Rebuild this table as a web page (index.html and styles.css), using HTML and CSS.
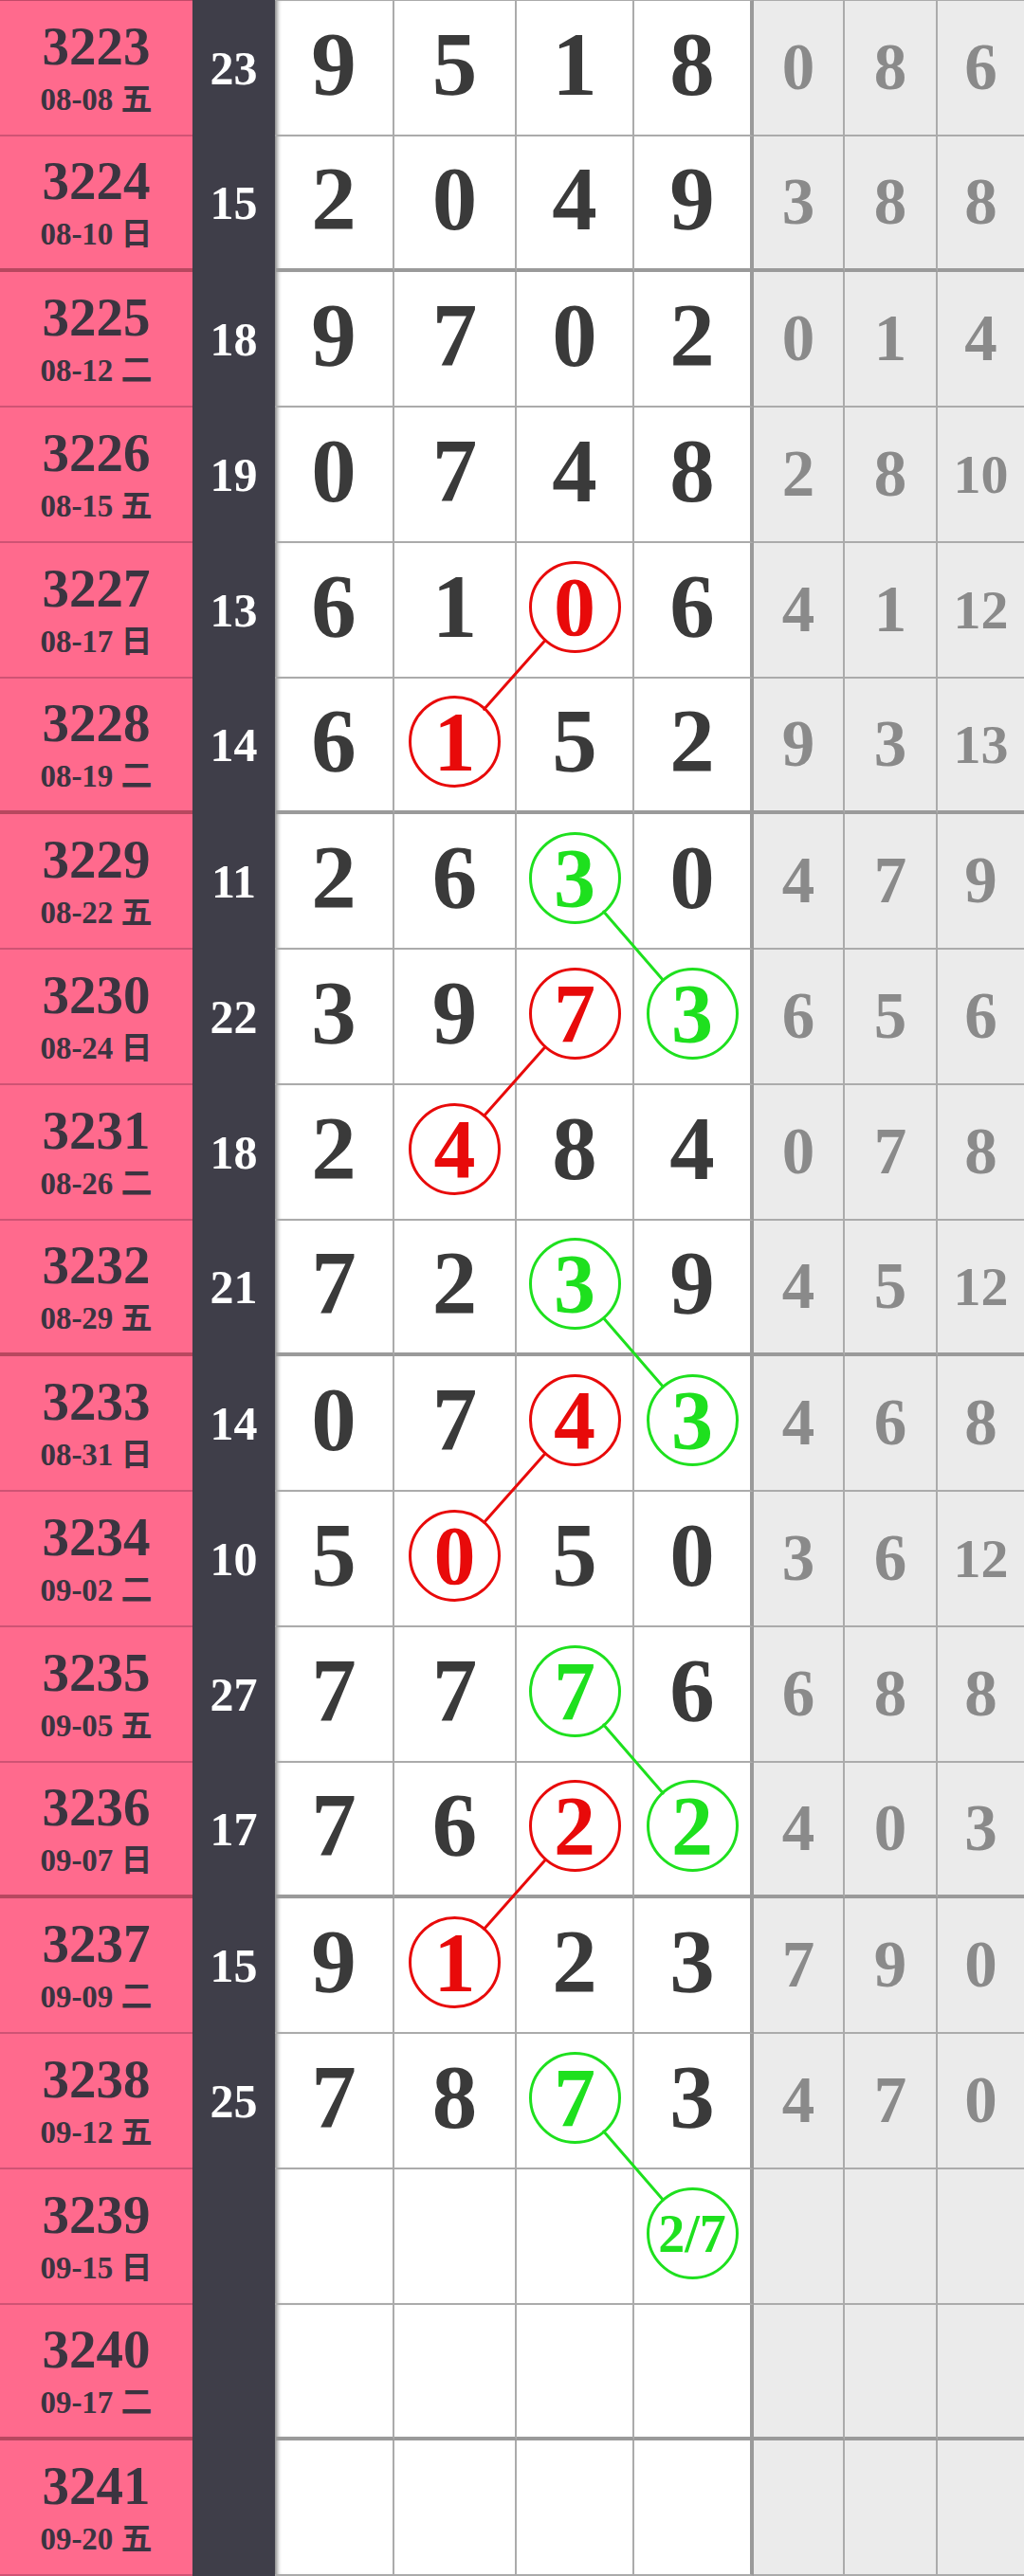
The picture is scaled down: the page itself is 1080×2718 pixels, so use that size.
FILE: index.html
```html
<!DOCTYPE html>
<html lang="zh">
<head>
<meta charset="utf-8">
<title>走势图</title>
<link rel="stylesheet" href="styles.css">
</head>
<body>
<div class="board">
  <div class="row first">
    <div class="no"><b>3223</b><span>08-08 五</span></div><div class="sum">23</div>
    <div class="d">9</div><div class="d">5</div><div class="d">1</div><div class="d">8</div>
    <div class="g">0</div><div class="g">8</div><div class="g">6</div>
  </div>
  <div class="row grp">
    <div class="no"><b>3224</b><span>08-10 日</span></div><div class="sum">15</div>
    <div class="d">2</div><div class="d">0</div><div class="d">4</div><div class="d">9</div>
    <div class="g">3</div><div class="g">8</div><div class="g">8</div>
  </div>
  <div class="row">
    <div class="no"><b>3225</b><span>08-12 二</span></div><div class="sum">18</div>
    <div class="d">9</div><div class="d">7</div><div class="d">0</div><div class="d">2</div>
    <div class="g">0</div><div class="g">1</div><div class="g">4</div>
  </div>
  <div class="row">
    <div class="no"><b>3226</b><span>08-15 五</span></div><div class="sum">19</div>
    <div class="d">0</div><div class="d">7</div><div class="d">4</div><div class="d">8</div>
    <div class="g">2</div><div class="g">8</div><div class="g two">10</div>
  </div>
  <div class="row">
    <div class="no"><b>3227</b><span>08-17 日</span></div><div class="sum">13</div>
    <div class="d">6</div><div class="d">1</div><div class="d"><span class="ring red">0</span></div><div class="d">6</div>
    <div class="g">4</div><div class="g">1</div><div class="g two">12</div>
  </div>
  <div class="row grp">
    <div class="no"><b>3228</b><span>08-19 二</span></div><div class="sum">14</div>
    <div class="d">6</div><div class="d"><span class="ring red">1</span></div><div class="d">5</div><div class="d">2</div>
    <div class="g">9</div><div class="g">3</div><div class="g two">13</div>
  </div>
  <div class="row">
    <div class="no"><b>3229</b><span>08-22 五</span></div><div class="sum">11</div>
    <div class="d">2</div><div class="d">6</div><div class="d"><span class="ring green">3</span></div><div class="d">0</div>
    <div class="g">4</div><div class="g">7</div><div class="g">9</div>
  </div>
  <div class="row">
    <div class="no"><b>3230</b><span>08-24 日</span></div><div class="sum">22</div>
    <div class="d">3</div><div class="d">9</div><div class="d"><span class="ring red">7</span></div><div class="d"><span class="ring green">3</span></div>
    <div class="g">6</div><div class="g">5</div><div class="g">6</div>
  </div>
  <div class="row">
    <div class="no"><b>3231</b><span>08-26 二</span></div><div class="sum">18</div>
    <div class="d">2</div><div class="d"><span class="ring red">4</span></div><div class="d">8</div><div class="d">4</div>
    <div class="g">0</div><div class="g">7</div><div class="g">8</div>
  </div>
  <div class="row grp">
    <div class="no"><b>3232</b><span>08-29 五</span></div><div class="sum">21</div>
    <div class="d">7</div><div class="d">2</div><div class="d"><span class="ring green">3</span></div><div class="d">9</div>
    <div class="g">4</div><div class="g">5</div><div class="g two">12</div>
  </div>
  <div class="row">
    <div class="no"><b>3233</b><span>08-31 日</span></div><div class="sum">14</div>
    <div class="d">0</div><div class="d">7</div><div class="d"><span class="ring red">4</span></div><div class="d"><span class="ring green">3</span></div>
    <div class="g">4</div><div class="g">6</div><div class="g">8</div>
  </div>
  <div class="row">
    <div class="no"><b>3234</b><span>09-02 二</span></div><div class="sum">10</div>
    <div class="d">5</div><div class="d"><span class="ring red">0</span></div><div class="d">5</div><div class="d">0</div>
    <div class="g">3</div><div class="g">6</div><div class="g two">12</div>
  </div>
  <div class="row">
    <div class="no"><b>3235</b><span>09-05 五</span></div><div class="sum">27</div>
    <div class="d">7</div><div class="d">7</div><div class="d"><span class="ring green">7</span></div><div class="d">6</div>
    <div class="g">6</div><div class="g">8</div><div class="g">8</div>
  </div>
  <div class="row grp">
    <div class="no"><b>3236</b><span>09-07 日</span></div><div class="sum">17</div>
    <div class="d">7</div><div class="d">6</div><div class="d"><span class="ring red">2</span></div><div class="d"><span class="ring green">2</span></div>
    <div class="g">4</div><div class="g">0</div><div class="g">3</div>
  </div>
  <div class="row">
    <div class="no"><b>3237</b><span>09-09 二</span></div><div class="sum">15</div>
    <div class="d">9</div><div class="d"><span class="ring red">1</span></div><div class="d">2</div><div class="d">3</div>
    <div class="g">7</div><div class="g">9</div><div class="g">0</div>
  </div>
  <div class="row">
    <div class="no"><b>3238</b><span>09-12 五</span></div><div class="sum">25</div>
    <div class="d">7</div><div class="d">8</div><div class="d"><span class="ring green">7</span></div><div class="d">3</div>
    <div class="g">4</div><div class="g">7</div><div class="g">0</div>
  </div>
  <div class="row">
    <div class="no"><b>3239</b><span>09-15 日</span></div><div class="sum"></div>
    <div class="d"></div><div class="d"></div><div class="d"></div><div class="d"><span class="ring green small">2/7</span></div>
    <div class="g"></div><div class="g"></div><div class="g"></div>
  </div>
  <div class="row grp">
    <div class="no"><b>3240</b><span>09-17 二</span></div><div class="sum"></div>
    <div class="d"></div><div class="d"></div><div class="d"></div><div class="d"></div>
    <div class="g"></div><div class="g"></div><div class="g"></div>
  </div>
  <div class="row last">
    <div class="no"><b>3241</b><span>09-20 五</span></div><div class="sum"></div>
    <div class="d"></div><div class="d"></div><div class="d"></div><div class="d"></div>
    <div class="g"></div><div class="g"></div><div class="g"></div>
  </div>

  <svg class="links" width="1080" height="2718" viewBox="0 0 1080 2718" aria-hidden="true">
    <g class="link-red">
      <line x1="574.9" y1="675.7" x2="510.6" y2="748.3"/>
      <line x1="574.9" y1="1104.7" x2="510.6" y2="1177.3"/>
      <line x1="574.9" y1="1533.7" x2="510.6" y2="1606.3"/>
      <line x1="574.9" y1="1962.7" x2="510.6" y2="2035.3"/>
    </g>
    <g class="link-green">
      <line x1="636.8" y1="962" x2="699.2" y2="1034"/>
      <line x1="636.8" y1="1391" x2="699.2" y2="1463"/>
      <line x1="636.8" y1="1820" x2="699.2" y2="1892"/>
      <line x1="636.8" y1="2249" x2="699.2" y2="2321"/>
    </g>
  </svg>
</div>
</body>
</html>
```

FILE: styles.css
```css
* {
  box-sizing: border-box;
  margin: 0;
  padding: 0;
}

body {
  margin: 0;
  background: #ffffff;
  font-family: "Liberation Serif", "Noto Sans CJK SC", serif;
  font-weight: 700;
}

.board {
  position: relative;
  width: 1080px;
  display: flex;
  flex-direction: column;
}

.row {
  display: grid;
  grid-template-columns: 203px 87px 126px 129px 124px 126px 96px 98px 91px;
  height: 143px;
}

.row.first {
  height: 144px;
}

.row > div {
  display: flex;
  align-items: center;
  justify-content: center;
  border-bottom: 2px solid #ababab;
}

.row.first > div {
  border-top: 1px solid #ababab;
}

.row.grp > div {
  border-bottom-width: 4px;
}

.row.grp > .d,
.row.grp > .g {
  border-bottom-color: #9a9a9a;
}

/* issue number + date */
.row > .no {
  flex-direction: column;
  gap: 12px;
  background: #ff6a8d;
  color: #3b3440;
  border-bottom-color: #cf5374;
}

.row.first > .no {
  border-top-color: #c24a69;
}

.row.grp > .no {
  border-bottom-color: #b8475f;
}

.no b {
  font-size: 57px;
  line-height: 56px;
  font-weight: 700;
}

.no span {
  font-size: 33px;
  line-height: 33px;
}

/* sum column */
.row > .sum {
  background: #3f3e49;
  color: #ffffff;
  font-size: 50px;
  line-height: 1;
  border-bottom-color: #3f3e49;
}

.row.first > .sum {
  border-top-color: #3f3e49;
}

/* draw digits */
.row > .d {
  background: #ffffff;
  color: #3a3a3a;
  font-size: 95px;
  line-height: 1;
  padding-bottom: 6px;
  border-right: 2px solid #ababab;
}

.row > .d:nth-child(3) {
  box-shadow: inset 6px 0 5px -4px rgba(0, 0, 0, 0.55);
}

.row > .d:nth-child(6) {
  border-right: 4px solid #9a9a9a;
}

/* gray stats */
.row > .g {
  background: #ebebeb;
  color: #8a8a8a;
  font-size: 69px;
  line-height: 1;
  border-right: 2px solid #ababab;
}

.row > .g:last-child {
  border-right: 0;
}

.row > .g.two {
  font-size: 58px;
}

/* circled digits */
.ring {
  width: 97px;
  height: 97px;
  border-radius: 50%;
  border: 3.5px solid;
  display: flex;
  align-items: center;
  justify-content: center;
  font-size: 88px;
  line-height: 1;
}

.ring.red {
  color: #e80a0a;
}

.ring.green {
  color: #1ee01e;
}

.ring.small {
  font-size: 56px;
}

.links {
  position: absolute;
  left: 0;
  top: 0;
  pointer-events: none;
}

.links line {
  stroke-width: 3;
  stroke-linecap: round;
}

.link-red line {
  stroke: #e80a0a;
}

.link-green line {
  stroke: #1ee01e;
}
```
